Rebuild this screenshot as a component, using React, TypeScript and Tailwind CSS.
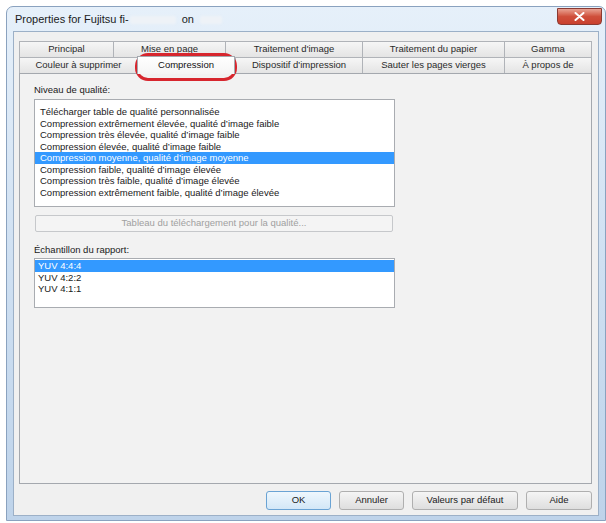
const font = { fontFamily: '"Liberation Sans", Arial, sans-serif' };

const row1 = [
  { label: 'Principal', w: 'w-[94px]' },
  { label: 'Mise en page', w: 'w-[112px]' },
  { label: "Traitement d'image", w: 'w-[137px]' },
  { label: 'Traitement du papier', w: 'w-[142px]' },
  { label: 'Gamma', w: 'w-[88px]' },
];

const row2 = [
  { label: 'Couleur à supprimer', w: 'w-[118px]' },
  { label: 'Compression', w: 'w-[98px]', active: true },
  { label: "Dispositif d'impression", w: 'w-[127px]' },
  { label: 'Sauter les pages vierges', w: 'w-[142px]' },
  { label: 'À propos de', w: 'w-[88px]' },
];

const levels = [
  'Télécharger table de qualité personnalisée',
  'Compression extrêmement élevée, qualité d’image faible',
  'Compression très élevée, qualité d’image faible',
  'Compression élevée, qualité d’image faible',
  'Compression moyenne, qualité d’image moyenne',
  'Compression faible, qualité d’image élevée',
  'Compression très faible, qualité d’image élevée',
  'Compression extrêmement faible, qualité d’image élevée',
];

const ratios = ['YUV 4:4:4', 'YUV 4:2:2', 'YUV 4:1:1'];

function Tab({ label, w, active }: { label: string; w: string; active?: boolean }) {
  if (active) {
    return (
      <div
        className={`${w} relative z-10 h-[18px] translate-y-[1px] flex items-center justify-center border border-b-0 border-[#a4a8ae] bg-gradient-to-b from-white to-[#f5f5f5] text-[9.5px] text-[#111]`}
      >
        {label}
      </div>
    );
  }
  return (
    <div
      className={`${w} h-[16px] flex items-center justify-center border border-b-0 border-r-0 last:border-r border-[#b0b3b8] bg-gradient-to-b from-[#f6f6f6] to-[#e4e4e4] text-[9.5px] text-[#2a2a2a]`}
    >
      {label}
    </div>
  );
}

function Button({ label, w, primary }: { label: string; w: string; primary?: boolean }) {
  return (
    <div
      className={`${w} h-[19px] flex items-center justify-center rounded-[3px] border text-[9.5px] text-[#1a1a1a] ${
        primary
          ? 'border-[#6aa3d4] bg-gradient-to-b from-[#eef7fd] to-[#d3e7f7]'
          : 'border-[#afafaf] bg-gradient-to-b from-[#f5f5f5] to-[#dedede]'
      }`}
    >
      {label}
    </div>
  );
}

export default function App() {
  return (
    <div className="w-[606px] h-[523px] bg-white overflow-hidden" style={font}>
      <div className="ml-[6px] mt-[6px] w-[600px] h-[515px] rounded-t-[7px] border border-[#8aa2bf] bg-gradient-to-b from-[#e6f0fa] via-[#cfe0f2] to-[#bed3ea] px-[6px] pb-[4px]">
        {/* title bar */}
        <div className="h-[24px] flex items-center justify-between">
          <div className="flex items-center text-[11px] text-[#1b1b1b] pl-[2px] pt-[1px]">
            <span>Properties for Fujitsu fi-</span>
            <span className="inline-block w-[46px] h-[8px] ml-[1px] rounded-[2px] bg-[#eef2f7] blur-[1px]" />
            <span className="ml-[6px]">on</span>
            <span className="inline-block w-[22px] h-[8px] ml-[6px] rounded-[2px] bg-[#eef2f7] blur-[1px]" />
          </div>
          <div className="self-start mt-[1px] mr-[-3px] w-[45px] h-[17px] rounded-b-[4px] border border-[#8a3a32] bg-gradient-to-b from-[#e8a192] via-[#cf4f3b] to-[#c9402e] flex items-center justify-center">
            <svg width="11" height="9" viewBox="0 0 11 9">
              <path d="M1.5 1 L9.5 8 M9.5 1 L1.5 8" stroke="#fff" strokeWidth="2" strokeLinecap="round" />
            </svg>
          </div>
        </div>

        {/* client area */}
        <div className="w-[586px] h-[485px] border border-[#9cb0c7] bg-[#f0f0f0] pl-[5px] pt-[9px]">
          <div className="relative w-[573px]">
            <div className="flex">
              {row1.map((t) => (
                <Tab key={t.label} {...t} />
              ))}
            </div>
            <div className="flex h-[16px] items-end">
              {row2.map((t) => (
                <Tab key={t.label} {...t} />
              ))}
            </div>

            {/* panel */}
            <div className="w-[573px] h-[411px] border border-[#a4a8ae] bg-[#f2f2f2] pl-[14px] pt-[10px] text-[9.5px] text-[#1a1a1a]">
              <div className="leading-[12px]">Niveau de qualité:</div>
              <div className="mt-[3px] w-[361px] h-[108px] border border-[#a9acb1] bg-white pt-[6px]">
                {levels.map((l, i) => (
                  <div
                    key={l}
                    className={`h-[11.5px] leading-[11.5px] pl-[5px] whitespace-nowrap ${
                      i === 4 ? 'bg-[#3399ff] text-white' : ''
                    }`}
                  >
                    {l}
                  </div>
                ))}
              </div>
              <div className="mt-[8px] ml-[1px] w-[358px] h-[17px] flex items-center justify-center rounded-[2px] border border-[#c6c8cb] bg-[#f4f4f4] text-[#a0a0a0]">
                Tableau du téléchargement pour la qualité...
              </div>
              <div className="mt-[12px] leading-[12px]">Échantillon du rapport:</div>
              <div className="mt-[2px] w-[361px] h-[50px] border border-[#a9acb1] bg-white pt-[1px]">
                {ratios.map((r, i) => (
                  <div
                    key={r}
                    className={`h-[11.5px] leading-[11.5px] pl-[3px] ${i === 0 ? 'bg-[#3399ff] text-white' : ''}`}
                  >
                    {r}
                  </div>
                ))}
              </div>
            </div>

            {/* red annotation around the active tab */}
            <div className="absolute left-[116px] top-[12px] w-[102px] h-[28px] rounded-[13px] border-[3px] border-[#d7262e]" />

            <div className="mt-[7px] flex justify-end gap-[8px]">
              <Button label="OK" w="w-[65px]" primary />
              <Button label="Annuler" w="w-[65px]" />
              <Button label="Valeurs par défaut" w="w-[106px]" />
              <Button label="Aide" w="w-[66px]" />
            </div>
          </div>
        </div>
      </div>
    </div>
  );
}
